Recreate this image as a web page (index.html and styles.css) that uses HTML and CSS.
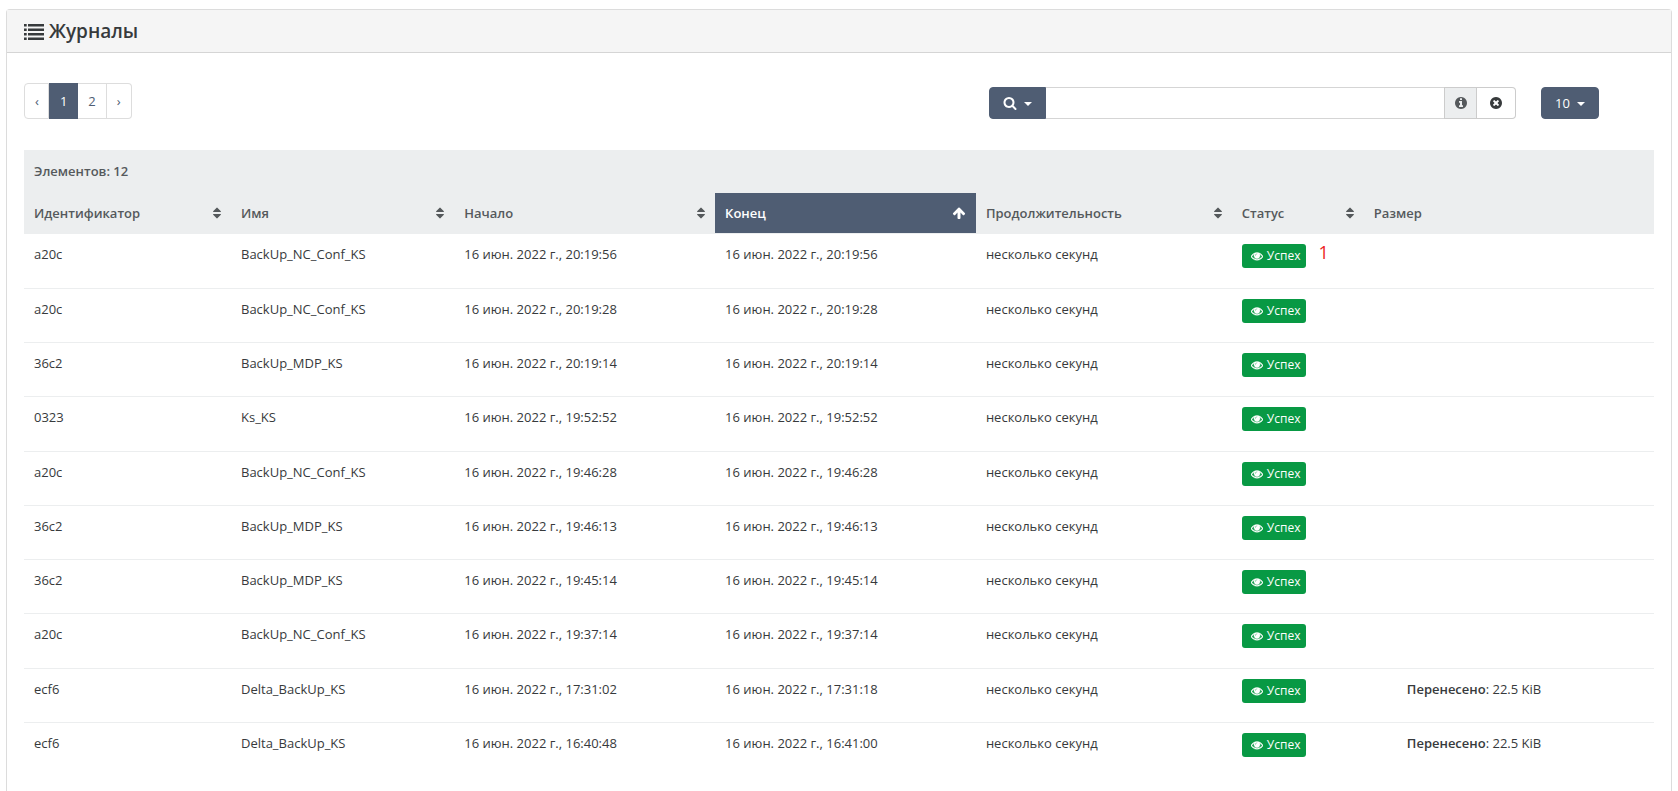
FILE: index.html
```html
<!DOCTYPE html>
<html lang="ru">
<head>
<meta charset="utf-8">
<title>Журналы</title>
<link rel="stylesheet" href="styles.css">
</head>
<body>
<svg class="sprite" aria-hidden="true">
  <symbol id="list" viewBox="0 0 20 16"><path d="M0 0h2.700v2.500H0zM4 0h16v2.500H4zM0 4.500h2.700v2.500H0zM4 4.500h16v2.500H4zM0 9h2.700v2.500H0zM4 9h16v2.500H4zM0 13.500h2.700v2.500H0zM4 13.500h16v2.500H4z"/></symbol>
  <symbol id="search" viewBox="0 0 1792 1792"><path d="M1216 832q0-185-131.500-316.500t-316.500-131.500-316.500 131.500-131.500 316.500 131.500 316.500 316.500 131.500 316.500-131.500 131.500-316.500zm512 832q0 52-38 90t-90 38q-54 0-90-38l-343-342q-179 124-399 124-143 0-273.500-55.500t-225-150-150-225-55.500-273.500 55.500-273.500 150-225 225-150 273.500-55.500 273.500 55.500 225 150 150 225 55.500 273.500q0 220-124 399l343 343q37 37 37 90z"/></symbol>
  <symbol id="info" viewBox="0 0 1792 1792"><path d="M1152 1376v-160q0-14-9-23t-23-9h-96v-512q0-14-9-23t-23-9h-320q-14 0-23 9t-9 23v160q0 14 9 23t23 9h96v320h-96q-14 0-23 9t-9 23v160q0 14 9 23t23 9h448q14 0 23-9t9-23zm-128-896v-160q0-14-9-23t-23-9h-192q-14 0-23 9t-9 23v160q0 14 9 23t23 9h192q14 0 23-9t9-23zm640 416q0 209-103 385.500t-279.500 279.500-385.500 103-385.500-103-279.500-279.500-103-385.500 103-385.500 279.500-279.500 385.500-103 385.500 103 279.500 279.500 103 385.500z"/></symbol>
  <symbol id="clear" viewBox="0 0 1792 1792"><path d="M1277 1122q0-26-19-45l-181-181 181-181q19-19 19-45 0-27-19-46l-90-90q-19-19-46-19-26 0-45 19l-181 181-181-181q-19-19-45-19-27 0-46 19l-90 90q-19 19-19 46 0 26 19 45l181 181-181 181q-19 19-19 45 0 27 19 46l90 90q19 19 46 19 26 0 45-19l181-181 181 181q19 19 45 19 27 0 46-19l90-90q19-19 19-46zm387-226q0 209-103 385.500t-279.500 279.500-385.500 103-385.500-103-279.500-279.500-103-385.500 103-385.500 279.500-279.500 385.500-103 385.500 103 279.500 279.500 103 385.500z"/></symbol>
  <symbol id="sort" viewBox="384 0 1024 1792"><path d="M1408 1088q0 26-19 45l-448 448q-19 19-45 19t-45-19l-448-448q-19-19-19-45t19-45 45-19h896q26 0 45 19t19 45zm0-384q0 26-19 45t-45 19h-896q-26 0-45-19t-19-45 19-45l448-448q19-19 45-19t45 19l448 448q19 19 19 45z"/></symbol>
  <symbol id="up" viewBox="0 0 1792 1792"><path d="M1675 971q0 51-37 90l-75 75q-38 38-91 38-54 0-90-38l-294-293v704q0 52-37.500 84.500t-90.500 32.500h-128q-53 0-90.500-32.500t-37.500-84.500v-704l-294 293q-36 38-90 38t-90-38l-75-75q-38-38-38-90 0-53 38-91l651-651q35-37 90-37 54 0 91 37l651 651q37 39 37 91z"/></symbol>
  <symbol id="eye" viewBox="0 0 1792 1792"><path d="M1664 960q-152-236-381-353 61 104 61 225 0 185-131.500 316.500t-316.500 131.500-316.500-131.500-131.500-316.500q0-121 61-225-229 117-381 353 133 205 333.500 326.500t434.500 121.500 434.500-121.500 333.500-326.500zm-720-384q0-20-14-34t-34-14q-125 0-214.500 89.500t-89.500 214.500q0 20 14 34t34 14 34-14 14-34q0-86 61-147t147-61q20 0 34-14t14-34zm848 384q0 34-20 69-140 230-376.500 368.500t-499.500 138.500-499.500-139-376.500-368q-20-35-20-69t20-69q140-229 376.500-368t499.500-139 499.500 139 376.500 368q20 35 20 69z"/></symbol>
</svg>
<main class="card">
  <header class="card-header">
    <svg class="icon-list" aria-hidden="true"><use href="#list"/></svg>
    <h1 class="title">Журналы</h1>
  </header>
  <div class="card-body">
    <div class="toolbar">
      <nav class="pagination" aria-label="Страницы">
        <a class="page" href="#prev">‹</a>
        <a class="page current" href="#1" aria-current="page">1</a>
        <a class="page" href="#2">2</a>
        <a class="page" href="#next">›</a>
      </nav>
      <form class="search">
        <button class="btn btn-dark search-menu" type="button" aria-label="Фильтры"><svg class="icon" aria-hidden="true"><use href="#search"/></svg><span class="caret"></span></button>
        <input class="search-input" type="text" aria-label="Поиск">
        <button class="btn btn-info" type="button" aria-label="Справка"><svg class="icon" aria-hidden="true"><use href="#info"/></svg></button>
        <button class="btn btn-clear" type="button" aria-label="Очистить"><svg class="icon" aria-hidden="true"><use href="#clear"/></svg></button>
      </form>
      <div><button class="btn btn-dark page-size" type="button">10<span class="caret"></span></button></div>
    </div>
    <table class="logs">
      <colgroup><col class="col-id"><col class="col-name"><col class="col-start"><col class="col-end"><col class="col-duration"><col class="col-status"><col class="col-size"></colgroup>
      <thead>
        <tr><th class="total" colspan="7">Элементов: 12</th></tr>
        <tr>
          <th><button class="sort" type="button">Идентификатор<svg class="icon-sort" aria-hidden="true"><use href="#sort"/></svg></button></th>
          <th><button class="sort" type="button">Имя<svg class="icon-sort" aria-hidden="true"><use href="#sort"/></svg></button></th>
          <th><button class="sort" type="button">Начало<svg class="icon-sort" aria-hidden="true"><use href="#sort"/></svg></button></th>
          <th class="sorted" aria-sort="descending"><button class="sort" type="button">Конец<svg class="icon" aria-hidden="true"><use href="#up"/></svg></button></th>
          <th><button class="sort" type="button">Продолжительность<svg class="icon-sort" aria-hidden="true"><use href="#sort"/></svg></button></th>
          <th><button class="sort" type="button">Статус<svg class="icon-sort" aria-hidden="true"><use href="#sort"/></svg></button></th>
          <th>Размер</th>
        </tr>
      </thead>
      <tbody>
        <tr><td>a20c</td><td>BackUp_NC_Conf_KS</td><td>16 июн. 2022 г., 20:19:56</td><td>16 июн. 2022 г., 20:19:56</td><td>несколько секунд</td><td><div class="status"><button class="btn-status" type="button"><svg class="icon-eye" aria-hidden="true"><use href="#eye"/></svg>Успех</button><span class="mark">1</span></div></td><td></td></tr>
        <tr><td>a20c</td><td>BackUp_NC_Conf_KS</td><td>16 июн. 2022 г., 20:19:28</td><td>16 июн. 2022 г., 20:19:28</td><td>несколько секунд</td><td><div class="status"><button class="btn-status" type="button"><svg class="icon-eye" aria-hidden="true"><use href="#eye"/></svg>Успех</button></div></td><td></td></tr>
        <tr><td>36c2</td><td>BackUp_MDP_KS</td><td>16 июн. 2022 г., 20:19:14</td><td>16 июн. 2022 г., 20:19:14</td><td>несколько секунд</td><td><div class="status"><button class="btn-status" type="button"><svg class="icon-eye" aria-hidden="true"><use href="#eye"/></svg>Успех</button></div></td><td></td></tr>
        <tr><td>0323</td><td>Ks_KS</td><td>16 июн. 2022 г., 19:52:52</td><td>16 июн. 2022 г., 19:52:52</td><td>несколько секунд</td><td><div class="status"><button class="btn-status" type="button"><svg class="icon-eye" aria-hidden="true"><use href="#eye"/></svg>Успех</button></div></td><td></td></tr>
        <tr><td>a20c</td><td>BackUp_NC_Conf_KS</td><td>16 июн. 2022 г., 19:46:28</td><td>16 июн. 2022 г., 19:46:28</td><td>несколько секунд</td><td><div class="status"><button class="btn-status" type="button"><svg class="icon-eye" aria-hidden="true"><use href="#eye"/></svg>Успех</button></div></td><td></td></tr>
        <tr><td>36c2</td><td>BackUp_MDP_KS</td><td>16 июн. 2022 г., 19:46:13</td><td>16 июн. 2022 г., 19:46:13</td><td>несколько секунд</td><td><div class="status"><button class="btn-status" type="button"><svg class="icon-eye" aria-hidden="true"><use href="#eye"/></svg>Успех</button></div></td><td></td></tr>
        <tr><td>36c2</td><td>BackUp_MDP_KS</td><td>16 июн. 2022 г., 19:45:14</td><td>16 июн. 2022 г., 19:45:14</td><td>несколько секунд</td><td><div class="status"><button class="btn-status" type="button"><svg class="icon-eye" aria-hidden="true"><use href="#eye"/></svg>Успех</button></div></td><td></td></tr>
        <tr><td>a20c</td><td>BackUp_NC_Conf_KS</td><td>16 июн. 2022 г., 19:37:14</td><td>16 июн. 2022 г., 19:37:14</td><td>несколько секунд</td><td><div class="status"><button class="btn-status" type="button"><svg class="icon-eye" aria-hidden="true"><use href="#eye"/></svg>Успех</button></div></td><td></td></tr>
        <tr><td>ecf6</td><td>Delta_BackUp_KS</td><td>16 июн. 2022 г., 17:31:02</td><td>16 июн. 2022 г., 17:31:18</td><td>несколько секунд</td><td><div class="status"><button class="btn-status" type="button"><svg class="icon-eye" aria-hidden="true"><use href="#eye"/></svg>Успех</button></div></td><td><div class="transfer"><strong>Перенесено</strong>: 22.5 KiB</div></td></tr>
        <tr><td>ecf6</td><td>Delta_BackUp_KS</td><td>16 июн. 2022 г., 16:40:48</td><td>16 июн. 2022 г., 16:41:00</td><td>несколько секунд</td><td><div class="status"><button class="btn-status" type="button"><svg class="icon-eye" aria-hidden="true"><use href="#eye"/></svg>Успех</button></div></td><td><div class="transfer"><strong>Перенесено</strong>: 22.5 KiB</div></td></tr>
      </tbody>
    </table>
  </div>
</main>
</body>
</html>
```
FILE: styles.css
```css
* { box-sizing: border-box; }

body {
  display: flex;
  flex-direction: column;
  min-height: 100vh;
  margin: 0;
  padding: 9px 6px 0;
  background: #fff;
  color: #373a3c;
  font: 13px/20px "Open Sans", "Noto Sans", sans-serif;
}

button, input { font: inherit; color: inherit; }
button { cursor: pointer; }
svg { flex: none; fill: currentColor; }

.sprite { position: absolute; width: 0; height: 0; }

.card {
  flex: 1;
  border: 1px solid #dcdcdc;
  border-bottom: 0;
  border-radius: 4px 4px 0 0;
}

.card-header {
  display: flex;
  align-items: center;
  gap: 5px;
  padding: 9px 17px 8px;
  border-bottom: 1px solid #d5d5d5;
  background: #f5f5f5;
}

.icon-list { width: 20px; height: 16px; }
.title { margin: 0; font-size: 19px; line-height: 25px; font-weight: 600; }
.card-body { padding: 30px 17px 0; }

.toolbar {
  display: grid;
  grid-template-columns: 965fr 552fr 113fr;
  align-items: end;
  margin-bottom: 31px;
}

.pagination { display: flex; }

.page {
  padding: 7px 10px;
  border: 1px solid #ddd;
  border-left: 0;
  color: #4f5d73;
  text-decoration: none;
}
.page:first-child { padding-right: 9px; border-left: 1px solid #ddd; border-radius: 4px 0 0 4px; }
.page:last-child { border-radius: 0 4px 4px 0; }
.page.current { border-left: 1px solid #4f5d73; border-color: #4f5d73; background: #4f5d73; color: #fff; }

.search { display: flex; margin-right: 25px; }

.btn {
  display: inline-flex;
  align-items: center;
  justify-content: center;
  height: 32px;
  border: 1px solid #ccc;
  background: #fff;
}
.btn-dark { padding: 0 13px; border-color: #4f5d73; background: #4f5d73; color: #fff; }
.search-menu { border-radius: 4px 0 0 4px; }
.page-size { border-radius: 4px; }

.search-input {
  flex: 1;
  min-width: 0;
  height: 32px;
  padding: 0 12px;
  border: 1px solid #d5d5d5;
  border-width: 1px 0;
  outline: 0;
}
.btn-info { width: 33px; padding: 0; background: #eceeef; color: #55595c; }
.btn-clear { width: 39px; padding: 0; border-left: 0; border-radius: 0 4px 4px 0; }

.icon { width: 14px; height: 14px; }

.caret {
  margin: 2px 0 0 7px;
  border: 4px solid transparent;
  border-top-color: currentColor;
  border-bottom: 0;
}

.logs { width: 100%; table-layout: fixed; border-collapse: separate; border-spacing: 0; }
.col-id { width: 12.7%; }
.col-name { width: 13.7%; }
.col-start { width: 16%; }
.col-end { width: 16%; }
.col-duration { width: 15.7%; }
.col-status { width: 8.1%; }
.col-size { width: 17.8%; }

.logs th {
  padding: 10px;
  border-bottom: 1px solid #eceeef;
  background: #eceeef;
  color: #55595c;
  text-align: left;
  font-weight: 600;
}
.logs .total { padding: 11px 10px; }
.logs .sorted { background: #4f5d73; color: #fff; }

.sort {
  display: flex;
  align-items: center;
  justify-content: space-between;
  width: 100%;
  padding: 0;
  border: 0;
  background: none;
}
.icon-sort { width: 8px; height: 14px; }

.logs td {
  height: 54px;
  padding: 10px;
  border-top: 1px solid #eceeef;
  vertical-align: top;
}
.logs tr:nth-child(4n) td { height: 55px; }
.logs tbody tr:first-child td { border-top: 0; }

.status { display: flex; gap: 12px; }

.btn-status {
  display: flex;
  flex: none;
  align-items: center;
  gap: 4px;
  height: 24px;
  padding: 0 6px 0 9px;
  border: 0;
  border-radius: 3px;
  background: #089944;
  color: #fff;
  font-size: 12px;
}
.icon-eye { width: 12px; height: 12px; stroke: currentColor; stroke-width: 60; }
.mark { color: #ed1c24; font-size: 18px; line-height: 16px; }
.transfer { padding-left: 33px; }
.transfer strong { font-weight: 600; }
```
